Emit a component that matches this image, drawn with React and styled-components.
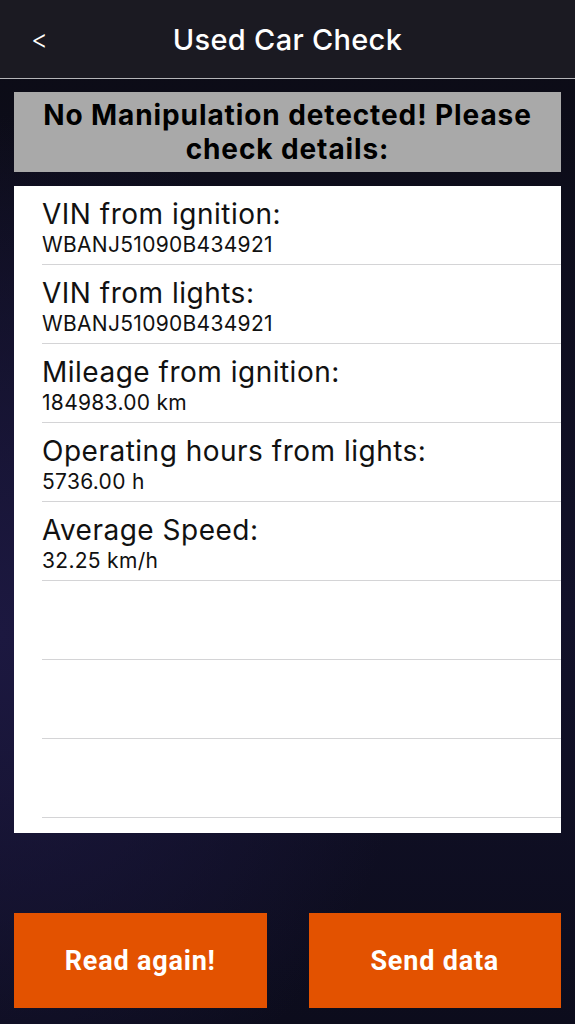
import React from "react";
import styled, { createGlobalStyle } from "styled-components";

const GlobalStyle = createGlobalStyle`
  html, body {
    margin: 0;
    padding: 0;
  }
  body {
    font-family: Inter, "Liberation Sans", Arial, sans-serif;
    background: #0d0d1a;
  }
`;

const Screen = styled.div`
  display: flex;
  flex-direction: column;
  width: 575px;
  height: 1024px;
  background:
    radial-gradient(ellipse 420px 520px at 0% 62%, #1c1840 0%, rgba(28, 24, 64, 0) 100%),
    linear-gradient(180deg, #0b0b14 0%, #12112a 60%, #0c0c1c 100%);
  overflow: hidden;
`;

const NavBar = styled.div`
  display: flex;
  align-items: center;
  justify-content: center;
  position: relative;
  height: 78px;
  background: #1b1a22;
  border-bottom: 1px solid #b5b5b8;
`;

const BackButton = styled.span`
  position: absolute;
  left: 31px;
  top: 24px;
  color: #fff;
  font-size: 26px;
  font-weight: 300;
`;

const NavTitle = styled.h1`
  margin: 0;
  color: #fff;
  font-size: 29px;
  font-weight: 500;
  letter-spacing: 0.3px;
`;

const Banner = styled.div`
  margin: 13px 14px 0;
  height: 80px;
  background: #a9a9a9;
  display: flex;
  align-items: center;
  justify-content: center;
  text-align: center;
  font-size: 28px;
  font-weight: 700;
  letter-spacing: 0.9px;
  line-height: 34px;
  color: #000;
`;

const List = styled.div`
  margin: 14px 14px 0;
  background: #fff;
  padding-bottom: 15px;
`;

const Row = styled.div`
  height: 79px;
  margin-left: 28px;
  border-bottom: 1px solid #d4d4d6;
  display: flex;
  flex-direction: column;
  padding-top: 12px;
  box-sizing: border-box;
`;

const Label = styled.div`
  font-size: 28px;
  line-height: 32px;
  letter-spacing: 0.5px;
  color: #111;
`;

const Value = styled.div`
  margin-top: 3px;
  font-size: 21px;
  line-height: 24px;
  color: #111;
  letter-spacing: 0.3px;
`;

const ButtonBar = styled.div`
  margin-top: auto;
  display: grid;
  grid-template-columns: 1fr 1fr;
  gap: 42px;
  padding: 0 14px 16px;
`;

const ActionButton = styled.button`
  height: 95px;
  border: none;
  background: #e35200;
  color: #fff;
  font-family: Roboto, "Liberation Sans", Arial, sans-serif;
  font-size: 27px;
  font-weight: 700;
  letter-spacing: 0.8px;
`;

const rows = [
  { label: "VIN from ignition:", value: "WBANJ51090B434921" },
  { label: "VIN from lights:", value: "WBANJ51090B434921" },
  { label: "Mileage from ignition:", value: "184983.00 km" },
  { label: "Operating hours from lights:", value: "5736.00 h" },
  { label: "Average Speed:", value: "32.25 km/h" },
  {},
  {},
  {},
];

export default function App() {
  return (
    <>
      <GlobalStyle />
      <Screen>
        <NavBar>
          <BackButton>&lt;</BackButton>
          <NavTitle>Used Car Check</NavTitle>
        </NavBar>
        <Banner>
          No Manipulation detected! Please
          <br />
          check details:
        </Banner>
        <List>
          {rows.map((r, i) => (
            <Row key={i}>
              {r.label && <Label>{r.label}</Label>}
              {r.value && <Value>{r.value}</Value>}
            </Row>
          ))}
        </List>
        <ButtonBar>
          <ActionButton>Read again!</ActionButton>
          <ActionButton>Send data</ActionButton>
        </ButtonBar>
      </Screen>
    </>
  );
}
